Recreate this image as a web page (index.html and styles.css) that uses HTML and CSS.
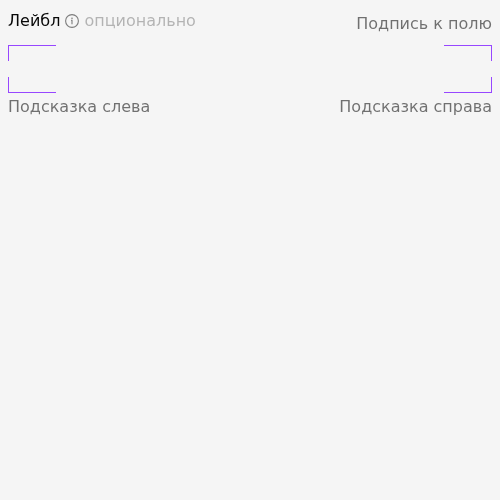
FILE: index.html
```html
<!DOCTYPE html>
<html lang="ru">
<head>
<meta charset="utf-8">
<title>Поле</title>
<link rel="stylesheet" href="styles.css">
</head>
<body>
<div class="field">
  <div class="header">
    <div class="label">
      <span class="label-text">Лейбл</span>
      <svg class="info" width="16" height="16" viewBox="0 0 16 16" fill="none">
        <circle cx="8" cy="8" r="6.4" stroke="currentColor" stroke-width="1.1"/>
        <path d="M7 7.2h1v4.1" stroke="currentColor" stroke-width="1.1"/>
        <circle cx="8" cy="5.2" r=".8" fill="currentColor"/>
      </svg>
      <span class="optional">опционально</span>
    </div>
    <div class="caption">Подпись к полю</div>
  </div>
  <div class="frame">
    <span class="corner top left"></span>
    <span class="corner top right"></span>
    <span class="corner bottom left"></span>
    <span class="corner bottom right"></span>
  </div>
  <div class="hints">
    <span>Подсказка слева</span>
    <span>Подсказка справа</span>
  </div>
</div>
</body>
</html>
```
FILE: styles.css
```css
body {
  margin: 8px;
  background: #f5f5f5;
  font: 16px/19px "DejaVu Sans", sans-serif;
  color: #080808;
}
.field {
  will-change: transform;
}
.header {
  display: flex;
  justify-content: space-between;
  height: 37px;
}
.label {
  display: flex;
  align-items: center;
  height: 25px;
  gap: 4px;
}
.info {
  margin-top: 1px;
  color: #7c7c7c;
}
.optional {
  color: rgba(8, 8, 8, 0.28);
}
.caption {
  padding-top: 6px;
  color: rgba(8, 8, 8, 0.56);
}
.frame {
  display: grid;
  grid-template-columns: 48px 48px;
  grid-template-rows: 16px 16px;
  justify-content: space-between;
  align-content: space-between;
  height: 48px;
}
.corner {
  border: 0 solid #9747ff;
}
.top { border-top-width: 1px; }
.bottom { border-bottom-width: 1px; }
.left { border-left-width: 1px; }
.right { border-right-width: 1px; }
.hints {
  display: flex;
  justify-content: space-between;
  padding-top: 4px;
  color: rgba(8, 8, 8, 0.56);
}
```
